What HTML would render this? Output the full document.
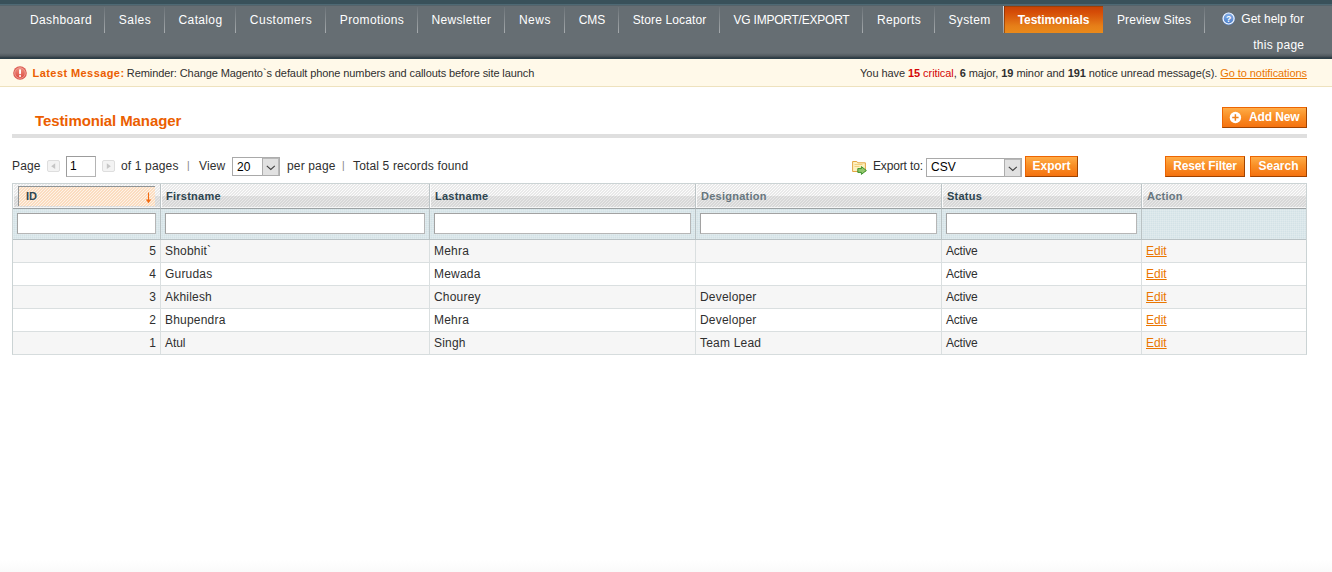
<!DOCTYPE html>
<html lang="en">
<head>
<meta charset="utf-8">
<title>Testimonial Manager / Magento Admin</title>
<style>
*{box-sizing:border-box;margin:0;padding:0}
html,body{width:1332px;height:572px;overflow:hidden;background:#fff}
body{font-family:"Liberation Sans",Arial,Helvetica,sans-serif;font-size:12px;line-height:18px;color:#2f2f2f;position:relative}
a{color:#ea7601;text-decoration:underline}

/* ---------- header strip + nav ---------- */
.topstrip{position:absolute;left:0;top:0;width:1332px;height:6px;background:linear-gradient(to bottom,#39515a 0,#39515a 4px,#4e6974 4px,#4e6974 5px,#55636a 5px,#55636a 6px)}
.navbar{position:absolute;left:0;top:6px;width:1332px;height:53px;background:#666e73;
  background-image:linear-gradient(to bottom,rgba(0,0,0,0) 0,rgba(0,0,0,0) 47px,rgba(40,50,56,.35) 50px,rgba(38,52,60,.95) 52px,#2d444f 53px)}
.nav{position:absolute;left:17px;top:0;height:27px;list-style:none;white-space:nowrap}
.nav li{position:absolute;top:0;height:27px;line-height:27px;font-size:12px;color:#fff;text-align:center}
.nav li:after{content:'';position:absolute;right:0;top:1px;width:1px;height:26px;background:linear-gradient(to bottom,rgba(255,255,255,.04),rgba(255,255,255,.42))}
.nav li span{display:block;position:relative;top:1px}
.nav li.act{background:linear-gradient(to bottom,#8a3d06 0,#c94507 1.5px,#d54c07 6px,#dd6410 13px,#e67f18 20px,#ea8a1b 100%);font-weight:bold;box-shadow:inset 1px 0 0 rgba(80,25,0,.45)}
.nav li.bsep:after{top:0;height:27px;background:linear-gradient(to bottom,rgba(255,255,255,.8),rgba(255,255,255,.3))}
.nav li.act:after,.nav li.nosep:after{display:none}
.help{position:absolute;left:1222px;top:0;width:82px;font-size:12px;color:#fff;line-height:26px;text-align:right}
.help svg{position:absolute;left:0;top:6px}

/* ---------- notification ---------- */
.notif{position:absolute;left:0;top:59px;width:1332px;height:28px;background:#fff9e9;border-bottom:1px solid #eee2be;font-size:11px;line-height:29px;color:#2f2f2f;letter-spacing:-.09px}
.notif .l{position:absolute;left:32.6px;top:0;white-space:nowrap}
.notif .r{position:absolute;right:25px;top:0;white-space:nowrap;letter-spacing:-.07px}
.notif .lbl{color:#eb5e00;font-weight:bold;font-size:11px;letter-spacing:.42px;margin-right:-.6px}
.notif .crit{color:#d40707}
.notif b{font-weight:bold}
.notif svg{position:absolute;left:12px;top:6px}

/* ---------- content header ---------- */
.chead{position:absolute;left:12px;top:100px;width:1295px;height:38px;border-bottom:4px solid #dfdfdf}

.chead h3{position:absolute;left:23px;top:11px;font-size:15px;letter-spacing:-.1px;line-height:20px;color:#eb5e00;font-weight:bold;white-space:nowrap}
.btn{position:absolute;height:21px;border:1px solid;border-color:#ed6502 #a04300 #a04300 #ed6502;background:linear-gradient(to bottom,#ffac47 0,#f98f26 45%,#f5720f 100%);color:#fff;font-weight:bold;font-size:12px;line-height:19px;text-align:center;white-space:nowrap}

/* ---------- toolbar ---------- */
.tb{position:absolute;top:157px;line-height:18px;white-space:nowrap;font-size:12px;letter-spacing:.15px}
.sep{color:#7d7d7d;font-size:10px}
.inp{position:absolute;background:#fff;border:1px solid;border-color:#9c9c9c #b4b4b4 #b4b4b4 #9c9c9c}
.pg{position:absolute;width:13px;height:12px;border:1px solid #dedede;border-radius:2px;background:#f3f3f3}
.pg svg{position:absolute;left:0;top:0}
.sel{position:absolute;height:19px;background:#fff;border:1px solid #a9a9a9;font-size:12px;line-height:18px;padding-left:4px;color:#000}
.sel i{position:absolute;right:-1px;top:-1px;width:18px;height:19px;background:#e1e1e1;border:1px solid #adadad;box-shadow:inset -1px 1px 0 #b8b8b8}
.sel i svg{position:absolute;left:2.5px;top:7px}

/* ---------- grid ---------- */
.grid{position:absolute;left:12px;top:183px;width:1295px;border:1px solid #cbd3d4;border-bottom-color:#d6dcdd}
table{border-collapse:separate;border-spacing:0;width:1293px;table-layout:fixed}
th,td{font-size:12px;text-align:left;vertical-align:middle;overflow:hidden;white-space:nowrap}
tr.h th{position:relative;height:25px;padding:0 4px 1px 5px;font-size:11px;letter-spacing:.25px;font-weight:bold;color:#2d444f;border-right:1px solid #bcc4c6;border-bottom:1px solid #9ca2a4;box-shadow:inset 1px 0 0 #fbfbfb,inset 0 -1px 0 #f6f6f6;
  background:repeating-linear-gradient(135deg,rgba(0,0,0,.075) 0,rgba(0,0,0,.075) .75px,rgba(0,0,0,0) .75px,rgba(0,0,0,0) 2.1213px),linear-gradient(to bottom,#fcfcfc 0,#fcfcfc 12px,#e9e9e9 12px,#e9e9e9 100%)}
tr.h th.ns{color:#67767e}
tr.h th .srt{position:absolute;left:5px;top:2px;right:5px;height:20px;border-left:1px solid #8f9496;border-top:1px solid #8f9496;padding-left:7px;letter-spacing:-.1px;line-height:19px;
  background:repeating-linear-gradient(135deg,rgba(240,140,50,.22) 0,rgba(240,140,50,.22) .75px,rgba(0,0,0,0) .75px,rgba(0,0,0,0) 2.1213px),#fef3e8}
tr.h th .srt svg{position:absolute;right:3px;top:4.5px}
tr.f th{position:relative;height:31px;border-right:1px solid #b9c2c4;border-bottom:1px solid #b9c2c5;padding:0;
  background:repeating-linear-gradient(0deg,rgba(255,255,255,.18) 0,rgba(255,255,255,.18) 1px,rgba(0,0,0,0) 1px,rgba(0,0,0,0) 2px),repeating-linear-gradient(90deg,rgba(255,255,255,.18) 0,rgba(255,255,255,.18) 1px,rgba(0,0,0,0) 1px,rgba(0,0,0,0) 2px),#d3e2e6}
.fi{position:absolute;left:4px;right:4px;top:4px;height:21px;background:#fff;border:1px solid;border-color:#a2a2a2 #b6b6b6 #b6b6b6 #a2a2a2}
tbody td{height:23px;padding:0 4px;border-right:1px solid #dadfe0;border-bottom:1px solid #dadfe0;line-height:21px;letter-spacing:.2px}
tbody tr:nth-child(odd) td{background:#f6f6f6}
tbody tr:last-child td{border-bottom:0;height:22px}
td.r{text-align:right;letter-spacing:0}
td.st{letter-spacing:-.2px}
td a{letter-spacing:0}
td:last-child,th:last-child{border-right:0 !important}
</style>
</head>
<body>

<div class="topstrip"></div>
<div class="navbar">
  <ul class="nav">
    <li style="left:0;width:88px"><span style="letter-spacing:.38px">Dashboard</span></li>
    <li style="left:88px;width:60px"><span style="letter-spacing:0.45px">Sales</span></li>
    <li style="left:148px;width:71px"><span style="letter-spacing:0.35px">Catalog</span></li>
    <li style="left:219px;width:90px"><span style="letter-spacing:0.48px">Customers</span></li>
    <li style="left:309px;width:92px"><span style="letter-spacing:0.36px">Promotions</span></li>
    <li style="left:401px;width:87px"><span style="letter-spacing:0.32px">Newsletter</span></li>
    <li style="left:488px;width:60px"><span style="letter-spacing:0.55px">News</span></li>
    <li style="left:548px;width:54px"><span style="letter-spacing:0px">CMS</span></li>
    <li style="left:602px;width:101px"><span style="letter-spacing:0.12px">Store Locator</span></li>
    <li style="left:703px;width:143px"><span style="letter-spacing:-0.23px">VG IMPORT/EXPORT</span></li>
    <li style="left:846px;width:72px"><span style="letter-spacing:0.27px">Reports</span></li>
    <li class="bsep" style="left:918px;width:69px"><span style="letter-spacing:0.32px">System</span></li>
    <li class="act" style="left:987px;width:99px"><span style="letter-spacing:-.08px">Testimonials</span></li>
    <li style="left:1086px;width:102px"><span style="letter-spacing:0.1px">Preview Sites</span></li>
  </ul>
  <div class="help">
    <svg width="14" height="14" viewBox="0 0 14 14"><defs><linearGradient id="gb" x1="0" y1="0" x2="0" y2="1"><stop offset="0" stop-color="#86b0ea"/><stop offset="1" stop-color="#4a7cc6"/></linearGradient></defs><circle cx="6.6" cy="6.9" r="6.3" fill="#5a86c8"/><circle cx="6.6" cy="6.5" r="5.5" fill="url(#gb)" stroke="#f2f6fc" stroke-width="1.2"/><text x="6.6" y="9.7" font-family="Liberation Sans, sans-serif" font-size="8.6" font-weight="bold" fill="#fff" text-anchor="middle">?</text></svg>
    Get help for<br><span style="letter-spacing:.26px;margin-right:-.26px">this page</span>
  </div>
</div>

<div class="notif">
  <svg width="16" height="16" viewBox="0 0 16 16"><defs><linearGradient id="gr" x1="0" y1="0" x2="0" y2="1"><stop offset="0" stop-color="#f0907f"/><stop offset="1" stop-color="#db4a41"/></linearGradient></defs><circle cx="8" cy="8" r="6.8" fill="#dc5a50"/><circle cx="8" cy="8" r="5.3" fill="url(#gr)" stroke="#f3aaa2" stroke-width=".8"/><rect x="7.1" y="4.2" width="1.9" height="5" rx=".7" fill="#fff"/><rect x="7.1" y="10" width="1.9" height="1.9" rx=".7" fill="#fff"/></svg>
  <div class="l"><span class="lbl">Latest Message:</span> Reminder: Change Magento`s default phone numbers and callouts before site launch</div>
  <div class="r">You have <b class="crit">15</b> <span class="crit">critical</span>, <b>6</b> major, <b>19</b> minor and <b>191</b> notice unread message(s). <a>Go to notifications</a></div>
</div>

<div class="chead">
  <h3>Testimonial Manager</h3>
  <div class="btn" style="left:1210px;top:7px;width:85px;padding-left:19.5px;letter-spacing:-.15px">
    <svg style="position:absolute;left:5px;top:2px" width="14" height="14" viewBox="0 0 14 14"><circle cx="7.4" cy="7.5" r="5.7" fill="#fff"/><path d="M7.4 4.3v6.4M4.2 7.5h6.4" stroke="#f0811b" stroke-width="1.5"/></svg>
    Add New</div>
</div>

<div style="position:absolute;left:0;top:560px;width:1332px;height:12px;background:linear-gradient(to bottom,#fff,#fafafa)"></div>

<!-- toolbar -->
<div class="tb" style="left:12px">Page</div>
<div class="pg" style="left:47px;top:160px"><svg width="11" height="10" viewBox="0 0 11 10"><path d="M7.2 2.3L3.2 5.2l4 2.9z" fill="#c6c6c6"/></svg></div>
<div class="inp" style="left:66px;top:156px;width:30px;height:21px;font-size:12px;line-height:19px;padding-left:3px;color:#000">1</div>
<div class="pg" style="left:102px;top:160px"><svg width="11" height="10" viewBox="0 0 11 10"><path d="M3.8 2.3L7.8 5.2l-4 2.9z" fill="#c6c6c6"/></svg></div>
<div class="tb" style="left:121px">of 1 pages</div>
<div class="tb sep" style="left:187px">|</div>
<div class="tb" style="left:199px">View</div>
<div class="sel" style="left:232px;top:157px;width:48px">20<i><svg width="10" height="6" viewBox="0 0 10 6"><path d="M.8 .8l4 3.7 4-3.7" fill="none" stroke="#404040" stroke-width="1.1"/></svg></i></div>
<div class="tb" style="left:287px">per page</div>
<div class="tb sep" style="left:342px">|</div>
<div class="tb" style="left:353px">Total 5 records found</div>

<svg style="position:absolute;left:851px;top:160px" width="17" height="16" viewBox="0 0 17 16">
  <path d="M1.6 1.5h4.2l1 1.3h7.6v8.7H1.6z" fill="#fdf0c0" stroke="#e3a544" stroke-width="1"/>
  <path d="M3.5 4.5h8M3.5 6.5h5" stroke="#f3cf7c" stroke-width="1" fill="none"/>
  <path d="M6.8 8.6h3.6V6.6l5 3.9-5 3.9v-2H6.8z" fill="#93c76d" stroke="#2f8a1f" stroke-width=".9" stroke-linejoin="round"/>
</svg>
<div class="tb" style="left:873px;letter-spacing:-.15px">Export to:</div>
<div class="sel" style="left:926px;top:158px;width:96px;line-height:16px">CSV<i><svg width="10" height="6" viewBox="0 0 10 6"><path d="M.8 .8l4 3.7 4-3.7" fill="none" stroke="#404040" stroke-width="1.1"/></svg></i></div>
<div class="btn" style="left:1025px;top:156px;width:53px">Export</div>
<div class="btn" style="left:1165px;top:156px;width:80px;letter-spacing:-.15px">Reset Filter</div>
<div class="btn" style="left:1250px;top:156px;width:57px">Search</div>

<!-- grid -->
<div class="grid">
<table>
  <colgroup><col style="width:148px"><col style="width:269px"><col style="width:266px"><col style="width:246px"><col style="width:200px"><col style="width:164px"></colgroup>
  <thead>
    <tr class="h">
      <th><div class="srt">ID<svg width="7" height="12" viewBox="0 0 7 12"><path d="M3.5 0.5v9" stroke="#f36a10" stroke-width="1.1" fill="none"/><path d="M0.8 7.6L3.5 11.2L6.2 7.6z" fill="#f36a10"/></svg></div></th><th>Firstname</th><th>Lastname</th><th class="ns">Designation</th><th>Status</th><th class="ns">Action</th>
    </tr>
    <tr class="f">
      <th><div class="fi"></div></th><th><div class="fi"></div></th><th><div class="fi"></div></th><th><div class="fi"></div></th><th><div class="fi"></div></th><th></th>
    </tr>
  </thead>
  <tbody>
    <tr><td class="r">5</td><td>Shobhit`</td><td>Mehra</td><td></td><td class="st">Active</td><td><a>Edit</a></td></tr>
    <tr><td class="r">4</td><td>Gurudas</td><td>Mewada</td><td></td><td class="st">Active</td><td><a>Edit</a></td></tr>
    <tr><td class="r">3</td><td>Akhilesh</td><td>Chourey</td><td>Developer</td><td class="st">Active</td><td><a>Edit</a></td></tr>
    <tr><td class="r">2</td><td>Bhupendra</td><td>Mehra</td><td>Developer</td><td class="st">Active</td><td><a>Edit</a></td></tr>
    <tr><td class="r">1</td><td style="letter-spacing:-.1px">Atul</td><td>Singh</td><td>Team Lead</td><td class="st">Active</td><td><a>Edit</a></td></tr>
  </tbody>
</table>
</div>

</body>
</html>
